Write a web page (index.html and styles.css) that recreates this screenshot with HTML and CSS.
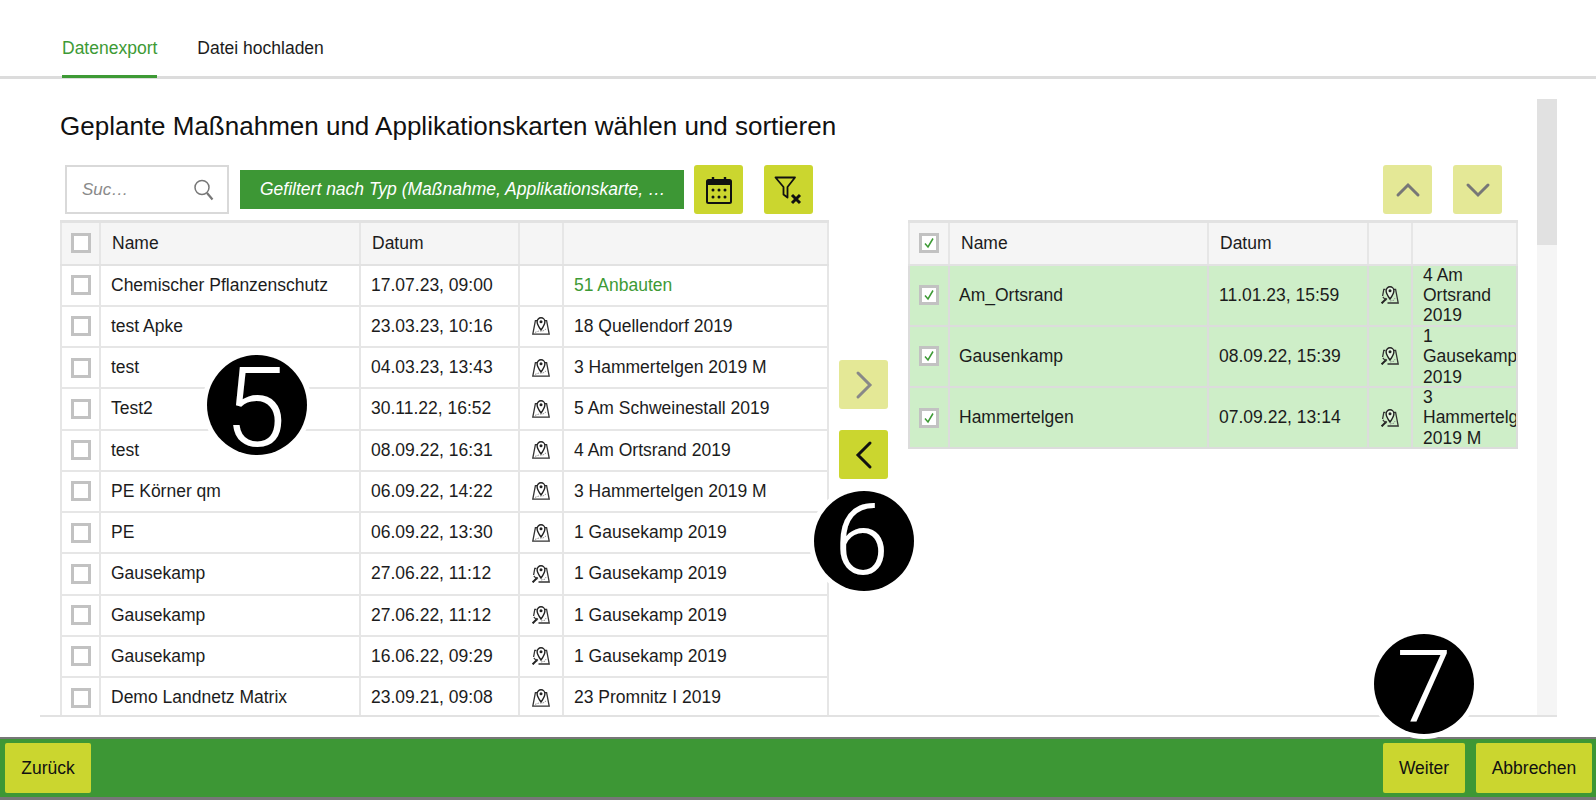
FILE: index.html
```html
<!DOCTYPE html>
<html lang="de">
<head>
<meta charset="utf-8">
<title>Datenexport</title>
<link rel="stylesheet" href="styles.css">
</head>
<body>
<svg class="defs" width="0" height="0" aria-hidden="true">
  <symbol id="map" viewBox="0 0 18 18">
    <path d="M5.4 3.6H3.4L.8 17.2H17.2L14.6 3.6H13" fill="none" stroke="#333" stroke-width="1.3"/>
    <path d="M9 .8A3.9 3.9 0 0 0 5.1 4.7C5.1 7.6 9 13 9 13s3.9-5.4 3.9-8.3A3.9 3.9 0 0 0 9 .8z" fill="#fff" fill-opacity=".5" stroke="#222" stroke-width="1.4"/>
    <circle cx="9" cy="4.7" r="1.5" fill="#222"/>
    <path d="M3 15.4l4-1.4h4l3-2" fill="none" stroke="#888" stroke-width=".9" stroke-dasharray="1.6 1"/>
  </symbol>
  <symbol id="mapx" viewBox="0 0 18 18">
    <path d="M4.4 3.4H2.8L1.6 10M13 3.4h1.6L17.2 17H6.5" fill="none" stroke="#333" stroke-width="1.3"/>
    <path d="M9 .8A3.9 3.9 0 0 0 5.1 4.7C5.1 7.6 9 13 9 13s3.9-5.4 3.9-8.3A3.9 3.9 0 0 0 9 .8z" fill="#fff" fill-opacity=".5" stroke="#222" stroke-width="1.4"/>
    <circle cx="9" cy="4.7" r="1.5" fill="#222"/>
    <path d="M.6 17.4l5-5" stroke="#222" stroke-width="2"/>
    <path d="M1.8 11l3.4 3.4" stroke="#333" stroke-width="1.1"/>
    <path d="M9 15l4-.8 1-2.2" fill="none" stroke="#888" stroke-width=".9" stroke-dasharray="1.6 1"/>
  </symbol>
  <symbol id="tick" viewBox="0 0 14 14">
    <path d="M3 7.5l3 3.5L11 2.5" fill="none" stroke="#3d9a35" stroke-width="1.5"/>
  </symbol>
</svg>

<div class="app">
  <nav class="tabs">
    <a class="tab tab-active">Datenexport</a>
    <a class="tab">Datei hochladen</a>
  </nav>

  <main class="main">
    <div class="inner">
      <div class="scroll">
        <h1 class="title">Geplante Maßnahmen und Applikationskarten wählen und sortieren</h1>
        <div class="panels">
          <section class="panel panel-left">
            <div class="toolbar">
              <div class="search">
                <input class="search-input" type="text" placeholder="Suc…">
                <svg class="search-icon" viewBox="0 0 22 24" width="22" height="24">
                  <circle cx="9" cy="9.5" r="7" fill="none" stroke="#777" stroke-width="1.5"/>
                  <path d="M14 15l5.5 6.5" stroke="#777" stroke-width="2.2" fill="none"/>
                </svg>
              </div>
              <div class="chip">Gefiltert nach Typ (Maßnahme, Applikationskarte, …</div>
              <button class="btn-icon">
                <svg viewBox="0 0 28 30" width="28" height="30">
                  <rect x="2" y="5" width="24" height="23" rx="1.5" fill="none" stroke="#111" stroke-width="2"/>
                  <rect x="2" y="5" width="24" height="5" fill="#111"/>
                  <path d="M8 2v5M20 2v5" stroke="#111" stroke-width="2.4"/>
                  <g fill="#111">
                    <circle cx="8" cy="15" r="1.5"/><circle cx="14" cy="15" r="1.5"/><circle cx="20" cy="15" r="1.5"/>
                    <circle cx="8" cy="22" r="1.5"/><circle cx="14" cy="22" r="1.5"/><circle cx="20" cy="22" r="1.5"/>
                  </g>
                </svg>
              </button>
              <button class="btn-icon btn-filter">
                <svg viewBox="0 0 30 30" width="30" height="30">
                  <path d="M1.5 2.5H21L13.5 12V22.5L9.5 19.5V12z" fill="none" stroke="#111" stroke-width="1.8" stroke-linejoin="round"/>
                  <path d="M18 20l8 8M26 20l-8 8" stroke="#111" stroke-width="3"/>
                </svg>
              </button>
            </div>
            <table class="grid">
              <colgroup><col class="c-check"><col class="c-name"><col class="c-date"><col class="c-icon"><col></colgroup>
              <thead>
                <tr><th><span class="box"></span></th><th>Name</th><th>Datum</th><th></th><th></th></tr>
              </thead>
              <tbody>
                <tr><td><span class="box"></span></td><td>Chemischer Pflanzenschutz</td><td>17.07.23, 09:00</td><td></td><td class="link">51 Anbauten</td></tr>
                <tr><td><span class="box"></span></td><td>test Apke</td><td>23.03.23, 10:16</td><td class="ic"><svg class="mi"><use href="#map"/></svg></td><td>18 Quellendorf 2019</td></tr>
                <tr><td><span class="box"></span></td><td>test</td><td>04.03.23, 13:43</td><td class="ic"><svg class="mi"><use href="#map"/></svg></td><td>3 Hammertelgen 2019 M</td></tr>
                <tr><td><span class="box"></span></td><td>Test2</td><td>30.11.22, 16:52</td><td class="ic"><svg class="mi"><use href="#map"/></svg></td><td>5 Am Schweinestall 2019</td></tr>
                <tr><td><span class="box"></span></td><td>test</td><td>08.09.22, 16:31</td><td class="ic"><svg class="mi"><use href="#map"/></svg></td><td>4 Am Ortsrand 2019</td></tr>
                <tr><td><span class="box"></span></td><td>PE Körner qm</td><td>06.09.22, 14:22</td><td class="ic"><svg class="mi"><use href="#map"/></svg></td><td>3 Hammertelgen 2019 M</td></tr>
                <tr><td><span class="box"></span></td><td>PE</td><td>06.09.22, 13:30</td><td class="ic"><svg class="mi"><use href="#map"/></svg></td><td>1 Gausekamp 2019</td></tr>
                <tr><td><span class="box"></span></td><td>Gausekamp</td><td>27.06.22, 11:12</td><td class="ic"><svg class="mi"><use href="#mapx"/></svg></td><td>1 Gausekamp 2019</td></tr>
                <tr><td><span class="box"></span></td><td>Gausekamp</td><td>27.06.22, 11:12</td><td class="ic"><svg class="mi"><use href="#mapx"/></svg></td><td>1 Gausekamp 2019</td></tr>
                <tr><td><span class="box"></span></td><td>Gausekamp</td><td>16.06.22, 09:29</td><td class="ic"><svg class="mi"><use href="#mapx"/></svg></td><td>1 Gausekamp 2019</td></tr>
                <tr><td><span class="box"></span></td><td>Demo Landnetz Matrix</td><td>23.09.21, 09:08</td><td class="ic"><svg class="mi"><use href="#map"/></svg></td><td>23 Promnitz I 2019</td></tr>
              </tbody>
            </table>
          </section>

          <div class="transfer">
            <button class="btn-icon btn-off">
              <svg viewBox="0 0 20 30" width="20" height="30"><path d="M4 3l12 12L4 27" fill="none" stroke="#888" stroke-width="3" stroke-linecap="round"/></svg>
            </button>
            <button class="btn-icon">
              <svg viewBox="0 0 20 30" width="20" height="30"><path d="M16 3L4 15l12 12" fill="none" stroke="#111" stroke-width="3" stroke-linecap="round"/></svg>
            </button>
          </div>

          <section class="panel panel-right">
            <div class="toolbar toolbar-right">
              <button class="btn-icon btn-off">
                <svg viewBox="0 0 30 20" width="30" height="20"><path d="M5 15L15 5l10 10" fill="none" stroke="#777" stroke-width="3" stroke-linecap="round"/></svg>
              </button>
              <button class="btn-icon btn-off">
                <svg viewBox="0 0 30 20" width="30" height="20"><path d="M5 5l10 10L25 5" fill="none" stroke="#777" stroke-width="3" stroke-linecap="round"/></svg>
              </button>
            </div>
            <table class="grid grid-selected">
              <colgroup><col class="c-check"><col class="c-name"><col class="c-date"><col class="c-icon"><col></colgroup>
              <thead>
                <tr><th><span class="box"><svg class="tick"><use href="#tick"/></svg></span></th><th>Name</th><th>Datum</th><th></th><th></th></tr>
              </thead>
              <tbody>
                <tr><td><span class="box"><svg class="tick"><use href="#tick"/></svg></span></td><td>Am_Ortsrand</td><td>11.01.23, 15:59</td><td class="ic"><svg class="mi"><use href="#mapx"/></svg></td><td><div class="wrap">4 Am Ortsrand 2019</div></td></tr>
                <tr><td><span class="box"><svg class="tick"><use href="#tick"/></svg></span></td><td>Gausenkamp</td><td>08.09.22, 15:39</td><td class="ic"><svg class="mi"><use href="#mapx"/></svg></td><td><div class="wrap">1 Gausekamp 2019</div></td></tr>
                <tr><td><span class="box"><svg class="tick"><use href="#tick"/></svg></span></td><td>Hammertelgen</td><td>07.09.22, 13:14</td><td class="ic"><svg class="mi"><use href="#mapx"/></svg></td><td><div class="wrap">3 Hammertelgen 2019 M</div></td></tr>
              </tbody>
            </table>
          </section>
        </div>
      </div>
      <div class="track"><div class="thumb"></div></div>
    </div>
  </main>

  <footer class="footer">
    <button class="btn-text">Zurück</button>
    <div class="footer-right">
      <button class="btn-text btn-next">Weiter</button>
      <button class="btn-text btn-cancel">Abbrechen</button>
    </div>
  </footer>
</div>

<div class="badge badge-5">5</div>
<div class="badge badge-6">6</div>
<div class="badge badge-7">7</div>
</body>
</html>
```
FILE: styles.css
```css
* { box-sizing: border-box; }
html, body { margin: 0; padding: 0; height: 800px; overflow: hidden; background: #fff; }
body { font-family: "Liberation Sans", Arial, sans-serif; color: #1c1c1c; font-size: 17.5px; position: relative; }
.defs { position: absolute; }

.app { height: 800px; display: flex; flex-direction: column; }

.tabs { height: 79px; flex: none; display: flex; gap: 40px; padding-left: 62px; border-bottom: 3px solid #dcdcdc; }
.tab { height: 78px; line-height: 96px; font-size: 17.5px; color: #1c1c1c; }
.tab-active { color: #3d9a35; border-bottom: 3px solid #3d9a35; }

.main { flex: 1; min-height: 0; padding: 0 39px 20px 40px; display: flex; }
.inner { flex: 1; min-width: 0; display: flex; border-bottom: 2px solid #e2e2e2; }
.scroll { flex: 1; min-width: 0; overflow: hidden; padding: 19px 0 0 20px; }
.track { width: 20px; flex: none; margin-top: 20px; background: #f5f5f5; }
.thumb { height: 146px; background: #e1e1e1; }

.title { margin: 0; height: 67px; line-height: 56px; font-size: 26px; font-weight: 400; color: #111; white-space: nowrap; }

.panels { display: flex; align-items: flex-start; }
.panel-left { width: 769px; flex: none; }
.panel-right { width: 610px; flex: none; }

.toolbar { height: 49px; margin-bottom: 6px; display: flex; align-items: center; padding-left: 5px; }
.toolbar-right { justify-content: flex-end; gap: 21px; padding: 0 16px 0 0; }

.search { width: 164px; height: 49px; border: 2px solid #d9d9d9; display: flex; align-items: center; padding: 0 12px 0 15px; }
.search-input { width: 100%; min-width: 0; border: 0; outline: 0; padding: 0; background: transparent; font: italic 17px "Liberation Sans", Arial, sans-serif; }
.search-input::placeholder { color: #8a8a8a; opacity: 1; }
.search-icon { flex: none; }

.chip { width: 444px; height: 39px; margin: 0 10px 0 11px; padding-left: 20px; line-height: 38px; background: #3d9735; color: #fff; font-style: italic; font-size: 17.5px; white-space: nowrap; overflow: hidden; }

.btn-icon { width: 49px; height: 49px; flex: none; border: 0; padding: 0; border-radius: 3px; background: #cbd62f; display: flex; align-items: center; justify-content: center; }
.btn-filter { margin-left: 21px; }
.btn-off { background: #e4e896; }

.transfer { width: 49px; flex: none; margin: 195px 20px 0 10px; display: flex; flex-direction: column; gap: 21px; }

.grid { width: 100%; table-layout: fixed; border-collapse: collapse; border: 2px solid #e2e2e2; border-top-width: 3px; border-bottom: 0; }
.c-check { width: 39px; }
.c-name { width: 260px; }
.c-date { width: 159px; }
.c-icon { width: 44px; }
.grid-selected .c-check { width: 40px; }
.grid-selected .c-name { width: 259px; }
.grid-selected .c-date { width: 160px; }
.grid th, .grid td { border: 2px solid #e6e6e6; padding: 0 10px; text-align: left; font-weight: 400; overflow: hidden; white-space: nowrap; }
.grid th { padding-left: 11px; }
.grid th:first-child, .grid td:first-child { padding: 0 0 0 9px; }
.grid thead th { height: 43px; background: #f5f5f5; border-bottom-color: #e2e2e2; }
.grid tbody td { height: 41.25px; }
.box { display: block; width: 20px; height: 20px; border: 3px solid #c2c2c2; background: #fff; position: relative; }
.tick { display: block; width: 14px; height: 14px; }
.link { color: #3d9a35; }
.grid td.ic { padding: 0; text-align: center; }
.mi { display: block; width: 18px; height: 18px; margin: 0 auto; }

.grid-selected tbody td { height: 61px; background: #ceeec8; border-color: #dcdcdc; line-height: 20.4px; }
.grid-selected tbody td:last-child { white-space: normal; }
.grid-selected tbody td:nth-child(2) { padding-left: 9px; }
.grid-selected { border-bottom: 2px solid #e2e2e2; }
.wrap { margin: -1px 0; }

.footer { height: 63px; flex: none; background: #3d9735; border-top: 2px solid #777; border-bottom: 3px solid #777; display: flex; justify-content: space-between; align-items: center; padding: 0 4px 0 5px; }
.footer-right { display: flex; gap: 11px; }
.btn-text { width: 86px; height: 50px; border: 0; border-radius: 2px; background: #cbd62f; color: #111; font: 17.5px "Liberation Sans", Arial, sans-serif; padding: 0; }
.btn-next { width: 82px; }
.btn-cancel { width: 116px; }

.badge { position: absolute; width: 100px; height: 100px; border-radius: 50%; background: #000; color: #fff; box-shadow: 0 0 0 5px #fff; font-family: Roboto, sans-serif; font-weight: 350; text-align: center; }
.badge-5 { left: 207px; top: 355px; padding-right: 4px; font-size: 112px; line-height: 106px; }
.badge-6 { left: 814px; top: 491px; padding-right: 5px; font-size: 99px; line-height: 98px; }
.badge-7 { left: 1374px; top: 634px; font-size: 100px; line-height: 106px; }
```
